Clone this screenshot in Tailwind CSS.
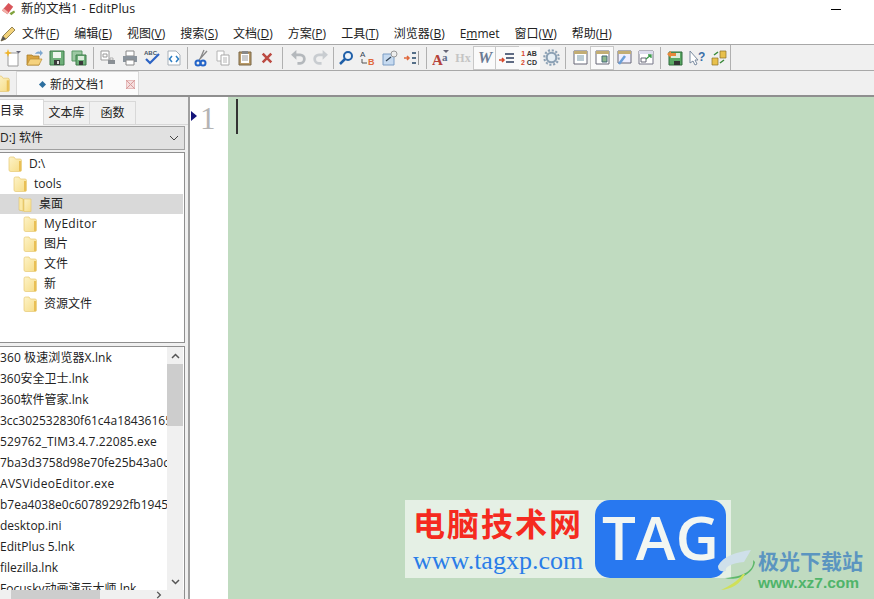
<!DOCTYPE html>
<html lang="zh"><head><meta charset="utf-8"><title>EditPlus</title>
<script src="https://cdn.jsdelivr.net/npm/@tailwindcss/browser@4"></script></head>
<body class="m-0 overflow-hidden bg-white">
<svg class="absolute h-0 w-0"><defs>
<linearGradient id="fg" x1="0" y1="0" x2="1" y2="1"><stop offset="0" stop-color="#fdf3c8"/><stop offset="1" stop-color="#f6dc86"/></linearGradient>
<symbol id="folder" viewBox="0 0 14 16"><path d="M1 2.500q0-1.500 1.500-1.500h3.500l1.500 2h4.500q1.500 0 1.500 1.500V14q0 1.500-1.500 1.500h-9Q1 15.500 1 14z" fill="url(#fg)" stroke="#e6c873" stroke-width=".7"/><path d="M11 5h2v10h-2z" fill="#e9bf55"/></symbol>
<symbol id="folderopen" viewBox="0 0 14 16"><path d="M1 1.500 6 3v12.500L1 14z" fill="#f0cf6a"/><path d="M6 3h7v12.500H6z" fill="url(#fg)" stroke="#e6c873" stroke-width=".7"/><path d="M1 1.500 5 3v12L1 14z" fill="#fbe9a6" stroke="#d9b95c" stroke-width=".5"/></symbol>
</defs></svg>
<div class="relative flex h-[599px] w-[874px] flex-col overflow-hidden bg-white text-[12px] leading-none text-[#222] [font-family:'Open_Sans','Noto_Sans_CJK_SC',sans-serif]">

<!-- title bar -->
<div class="flex h-[18px] shrink-0 items-center justify-between pl-[1px] pr-[33px]">
  <div class="flex items-center gap-[5px]">
    <svg class="h-[15px] w-[15px]" viewBox="0 0 16 16"><path d="M1 9 8 1l5 4-6 8z" fill="#d9555a"/><path d="M1 9l6 4 1-2-5-4z" fill="#f2b0a8"/><path d="M9 12l2 2 4-3-1-2z" fill="#7fa23c"/></svg>
    <span class="text-[12.500px]">新的文档1 - EditPlus</span>
  </div>
  <div class="h-[1px] w-[10px] bg-black"></div>
</div>

<!-- menu -->
<div class="mt-[4px] flex h-[22px] shrink-0 items-center pt-[2px]">
  <svg class="h-[16px] w-[16px]" viewBox="0 0 16 16"><path d="M1 15l2-5L12 1l3 3-9 9z" fill="#f2d27a" stroke="#7a6a3a" stroke-width=".8"/><path d="M1 15l2-5 3 3z" fill="#555"/></svg>
  <div class="ml-[6px] flex gap-[15px] whitespace-nowrap text-[12px]">
    <span>文件(<u>F</u>)</span><span>编辑(<u>E</u>)</span><span>视图(<u>V</u>)</span><span>搜索(<u>S</u>)</span><span>文档(<u>D</u>)</span><span>方案(<u>P</u>)</span><span>工具(<u>T</u>)</span><span>浏览器(<u>B</u>)</span><span>E<u>m</u>met</span><span>窗口(<u>W</u>)</span><span>帮助(<u>H</u>)</span>
  </div>
</div>

<!-- toolbar -->
<div class="flex h-[27px] shrink-0 items-center border-y border-[#a8a8a8] bg-[#f0f0f0] pl-[2px]">
  <span class="flex h-[22px] w-[22px] items-center justify-center"><svg class="h-[18px] w-[18px]" viewBox="0 0 18 18"><path d="M4 4h10v13H4z" fill="#fff" stroke="#9a9a9a"/><path d="M4 0l1 3 3 1-3 1-1 3-1-3-3-1 3-1z" fill="#f0b429"/><path d="M12 2h5l-2.500 2.500z" fill="#667"/></svg></span>
  <span class="flex h-[22px] w-[22px] items-center justify-center"><svg class="h-[18px] w-[18px]" viewBox="0 0 18 18"><path d="M1 6h5l1 1h6v9H1z" fill="#d9a441" stroke="#a67c28" stroke-width=".8"/><path d="M1 16l3-6h12l-3 6z" fill="#f5d27e" stroke="#b88c30" stroke-width=".7"/><path d="M9 5c1-2 3-3 5-2V1l3 3-3 3V5c-2-.5-3 0-5 0z" fill="#7fa8d0"/></svg></span>
  <span class="flex h-[22px] w-[22px] items-center justify-center"><svg class="h-[16px] w-[16px]" viewBox="0 0 16 16"><path d="M1 1h14v14H1z" fill="#6fb07a" stroke="#3d7a48"/><path d="M4 2h8v6H4z" fill="#eef6ee"/><path d="M5 10h6v5H5z" fill="#3a3a3a"/><path d="M8 11h2v3H8z" fill="#ddd"/></svg></span>
  <span class="flex h-[22px] w-[22px] items-center justify-center"><svg class="h-[16px] w-[16px]" viewBox="0 0 16 16"><path d="M1 1h10v10H1z" fill="#9cc8a2" stroke="#5b9a66"/><path d="M5 5h10v10H5z" fill="#6fb07a" stroke="#3d7a48"/><path d="M7 6h6v4H7z" fill="#dcecdc"/><path d="M8 11h4v4H8z" fill="#3a3a3a"/></svg></span>
  <span class="mx-[3px] h-[22px] w-[1px] bg-[#b0b0b0]"></span>
  <span class="flex h-[22px] w-[22px] items-center justify-center"><svg class="h-[16px] w-[16px]" viewBox="0 0 16 16"><path d="M1 1h8v9H1z" fill="#fff" stroke="#999"/><path d="M3 4h4v3H3z" fill="none" stroke="#999"/><path d="M8 10h7v4H8z" fill="#8a8f94"/><path d="M10 8h3v2h-3z" fill="#fff" stroke="#888" stroke-width=".6"/></svg></span>
  <span class="flex h-[22px] w-[22px] items-center justify-center"><svg class="h-[16px] w-[16px]" viewBox="0 0 16 16"><path d="M4 1h8v5H4z" fill="#fff" stroke="#888"/><path d="M1 6h14v6H1z" fill="#8a939c"/><path d="M4 10h8v5H4z" fill="#fff" stroke="#888"/></svg></span>
  <span class="flex h-[22px] w-[22px] items-center justify-center"><svg class="h-[18px] w-[18px]" viewBox="0 0 18 18"><text x="1" y="6" font-size="6" font-weight="700" fill="#456" font-family="Liberation Sans">ABC</text><path d="M3 10l4 4 9-9" fill="none" stroke="#2c63c4" stroke-width="2.200"/></svg></span>
  <span class="flex h-[22px] w-[22px] items-center justify-center"><svg class="h-[16px] w-[16px]" viewBox="0 0 16 16"><path d="M2 1h8l4 4v10H2z" fill="#fff" stroke="#a8b0b8"/><path d="M6 6 3.500 9 6 12M10 6l2.500 3L10 12" fill="none" stroke="#2d7fc4" stroke-width="1.500"/></svg></span>
  <span class="mx-[2px] h-[22px] w-[1px] bg-[#b0b0b0]"></span>
  <span class="flex h-[22px] w-[22px] items-center justify-center"><svg class="h-[18px] w-[16px]" viewBox="0 0 16 18"><path d="M11 1 7 10M14 2 6 11" stroke="#888" stroke-width="1.300"/><circle cx="5" cy="14" r="2.500" fill="none" stroke="#2364c8" stroke-width="2"/><circle cx="10" cy="14" r="2.500" fill="none" stroke="#2364c8" stroke-width="2"/></svg></span>
  <span class="flex h-[22px] w-[22px] items-center justify-center"><svg class="h-[16px] w-[16px]" viewBox="0 0 16 16"><path d="M2 1h7v10H2z" fill="#fff" stroke="#b4b4b4"/><path d="M6 5h8v10H6z" fill="#fff" stroke="#a8a8a8"/><path d="M8 8h4M8 10h4M8 12h4" stroke="#b4b4b4"/></svg></span>
  <span class="flex h-[22px] w-[22px] items-center justify-center"><svg class="h-[16px] w-[16px]" viewBox="0 0 16 16"><path d="M2 2h12v13H2z" fill="#b99a68" stroke="#7a6644"/><path d="M4 4h8v9H4z" fill="#fff"/><path d="M5 1h6v3H5z" fill="#888"/><path d="M5 6h6M5 8h6M5 10h6" stroke="#999"/></svg></span>
  <span class="flex h-[22px] w-[22px] items-center justify-center"><svg class="h-[12px] w-[12px]" viewBox="0 0 14 14"><path d="M2 2l10 10M12 2 2 12" stroke="#bc4a42" stroke-width="3"/></svg></span>
  <span class="mx-[4px] h-[22px] w-[1px] bg-[#b0b0b0]"></span>
  <span class="flex h-[22px] w-[22px] items-center justify-center"><svg class="h-[17px] w-[17px]" viewBox="0 0 16 16"><path d="M5 5.500h4.500a4 4 0 0 1 0 8H7" fill="none" stroke="#b4b8bc" stroke-width="2.600"/><path d="M6 1 1 5.500 6 10z" fill="#b4b8bc"/></svg></span>
  <span class="flex h-[22px] w-[22px] items-center justify-center"><svg class="h-[17px] w-[17px]" viewBox="0 0 16 16"><path d="M11 5.500H6.500a4 4 0 0 0 0 8H9" fill="none" stroke="#c8ccd0" stroke-width="2.600"/><path d="M10 1l5 4.500L10 10z" fill="#c8ccd0"/></svg></span>
  <span class="mx-[1.500px] h-[22px] w-[1px] bg-[#b0b0b0]"></span>
  <span class="flex h-[22px] w-[22px] items-center justify-center"><svg class="h-[16px] w-[16px]" viewBox="0 0 16 16"><circle cx="10" cy="6" r="4" fill="#eef4fa" stroke="#1f5fa8" stroke-width="2"/><path d="M7 9l-5 5" stroke="#1f5fa8" stroke-width="2.500"/></svg></span>
  <span class="flex h-[22px] w-[22px] items-center justify-center"><svg class="h-[18px] w-[18px]" viewBox="0 0 18 18"><text x="1" y="8" font-size="8" fill="#345" font-family="Liberation Sans">A</text><text x="9" y="16" font-size="9" font-weight="700" fill="#e0683c" font-family="Liberation Sans">B</text><path d="M3 10v4h5" fill="none" stroke="#555"/></svg></span>
  <span class="flex h-[22px] w-[22px] items-center justify-center"><svg class="h-[16px] w-[16px]" viewBox="0 0 16 16"><path d="M1 4h11v11H1z" fill="#c6daf0" stroke="#7a9cc4"/><circle cx="12" cy="4" r="3" fill="#eee" stroke="#999"/><path d="M4 11l5-4" stroke="#345" stroke-width="1.200"/></svg></span>
  <span class="flex h-[22px] w-[22px] items-center justify-center"><svg class="h-[16px] w-[16px]" viewBox="0 0 16 16"><path d="M0 8h4M3 6l2 2-2 2" fill="none" stroke="#e0683c" stroke-width="1.500"/><path d="M8 3h4M8 8h4M8 13h4" stroke="#246" stroke-width="1.500"/><path d="M14.500 1v14" stroke="#999"/></svg></span>
  <span class="mx-[3px] h-[22px] w-[1px] bg-[#b0b0b0]"></span>
  <span class="flex h-[22px] w-[22px] items-center justify-center"><svg class="h-[18px] w-[18px]" viewBox="0 0 18 18"><text x="0" y="16" font-size="15" font-weight="700" fill="#b5433a" font-family="Liberation Serif">A</text><text x="10" y="12" font-size="11" font-weight="700" fill="#5d6d8a" font-family="Liberation Serif">a</text><path d="M11 1h6l-3 3z" fill="#667"/></svg></span>
  <span class="flex h-[22px] w-[22px] items-center justify-center text-[12px] font-bold text-[#c4c4c4] [font-family:'Liberation_Serif',serif]">Hx</span>
  <span class="flex h-[22px] w-[22px] items-center justify-center bg-[#fafafa] text-[16px] font-bold italic text-[#6a7a94] outline outline-[#c8c8c8] [font-family:'Liberation_Serif',serif]">W</span>
  <span class="flex h-[22px] w-[22px] items-center justify-center bg-[#fafafa] outline outline-[#c8c8c8]"><svg class="h-[16px] w-[16px]" viewBox="0 0 16 16"><path d="M0 10h5M3 8l2 2-2 2" fill="none" stroke="#d8482c" stroke-width="1.500"/><path d="M6 4h9M7 8h8M7 12h8" stroke="#2c3c5c" stroke-width="1.300"/></svg></span>
  <span class="flex h-[22px] w-[22px] flex-col items-center justify-center bg-[#fafafa] text-[7px] font-bold text-[#333] [font-family:'Liberation_Sans',sans-serif]"><span><span class="text-[#d8482c]">1</span> AB</span><span class="mt-[2px]"><span class="text-[#d8482c]">2</span> CD</span></span>
  <span class="flex h-[22px] w-[22px] items-center justify-center"><svg class="h-[17px] w-[17px]" viewBox="0 0 16 16"><circle cx="8" cy="8" r="4.500" fill="#e6eef4" stroke="#8ba0b4" stroke-width="2"/><circle cx="8" cy="8" r="6.800" fill="none" stroke="#8ba0b4" stroke-width="2" stroke-dasharray="2 1.560"/></svg></span>
  <span class="mx-[3px] h-[22px] w-[1px] bg-[#b0b0b0]"></span>
  <span class="flex h-[22px] w-[22px] items-center justify-center"><svg class="h-[15px] w-[15px]" viewBox="0 0 15 15"><path d="M1 1h13v13H1z" fill="#fff" stroke="#667"/><path d="M1 1h13v3H1z" fill="#c2ad74"/><path d="M4 6h7M4 8h7M4 10h7" stroke="#79a"/></svg></span>
  <span class="flex h-[22px] w-[22px] items-center justify-center bg-[#fafafa] outline outline-[#c8c8c8]"><svg class="h-[15px] w-[15px]" viewBox="0 0 15 15"><path d="M1 1h13v13H1z" fill="#fff" stroke="#667"/><path d="M1 1h13v3H1z" fill="#c2ad74"/><path d="M7 6h5v6H7z" fill="#8cb88c" stroke="#467"/></svg></span>
  <span class="flex h-[22px] w-[22px] items-center justify-center"><svg class="h-[16px] w-[16px]" viewBox="0 0 16 16"><path d="M2 1h13v12H2z" fill="#eef" stroke="#667"/><path d="M2 1h13v3H2z" fill="#c2ad74"/><path d="M9 6 3 14" stroke="#6a9ed8" stroke-width="2.500"/></svg></span>
  <span class="flex h-[22px] w-[22px] items-center justify-center"><svg class="h-[15px] w-[16px]" viewBox="0 0 16 15"><path d="M1 1h14v13H1z" fill="#fff" stroke="#778"/><path d="M1 1h14v3H1z" fill="#dde"/><path d="M3 8h5v4H3z" fill="none" stroke="#667"/><path d="M8 9l5-4M10 5h3v3" fill="none" stroke="#3a9a4a" stroke-width="1.300"/></svg></span>
  <span class="mx-[3px] h-[22px] w-[1px] bg-[#b0b0b0]"></span>
  <span class="flex h-[22px] w-[22px] items-center justify-center"><svg class="h-[16px] w-[16px]" viewBox="0 0 16 16"><path d="M2 2h13v13H2z" fill="#5aa864" stroke="#2f6b3a"/><path d="M4 3h9v5H4z" fill="#dcecdc"/><path d="M7 11h6v4H7z" fill="#333"/><path d="M0 4l4-3v2h5v3H4v2z" fill="#e8883c"/></svg></span>
  <span class="flex h-[22px] w-[22px] items-center justify-center"><svg class="h-[16px] w-[16px]" viewBox="0 0 16 16"><path d="M1 1v12l3-2 2 4 2-1-2-4h3z" fill="#fff" stroke="#7a8ba0"/><text x="9" y="11" font-size="12" font-weight="700" fill="#3a6ea8" font-family="Liberation Sans">?</text></svg></span>
  <span class="flex h-[22px] w-[22px] items-center justify-center"><svg class="h-[16px] w-[16px]" viewBox="0 0 16 16"><path d="M9 1h6v7H9zM1 8h6v7H1z" fill="#e8c04c" stroke="#8a7028" stroke-width=".7"/><path d="M3 5l4-3M9 13l4-3" fill="none" stroke="#3a8a3a" stroke-width="1.500"/></svg></span>
  <span class="h-[25px] w-[1px] bg-[#b0b0b0]"></span>
</div>

<!-- tab row -->
<div class="flex h-[26px] shrink-0 items-end border-b-2 border-[#8f8f8f] bg-[#f0f0f0]">
  <svg class="-ml-[5px] mb-[3px] h-[17px] w-[15px]" viewBox="0 0 14 16"><use href="#folder"/></svg>
  <div class="ml-[6px] flex h-[24px] w-[123px] items-center border border-b-0 border-[#d8d8d8] bg-[#fbfbfb] pl-[23px] pt-[2px]">
    <span class="mr-[5px] h-[5px] w-[5px] rotate-45 bg-[#2d6f9f]"></span><span class="text-[12px]">新的文档1</span>
    <svg class="ml-[21px] h-[9px] w-[9px]" viewBox="0 0 9 9"><path d="M0 0l9 9M9 0 0 9M0 0h9v9H0z" fill="#f4dede" stroke="#d99a9a"/></svg>
  </div>
</div>

<!-- main -->
<div class="flex min-h-0 flex-1">
  <div class="flex w-[188px] shrink-0 flex-col bg-[#f0f0f0]">
    <div class="flex h-[28px] shrink-0 items-end border-b border-[#d8d8d8] pr-[2px]">
      <div class="flex h-[26px] w-[44px] items-start border-r border-t border-[#d8d8d8] bg-white -mb-[1px] pt-[5px]">目录</div>
      <div class="flex h-[23px] w-[46px] items-center justify-center border-r border-t border-[#d8d8d8]">文本库</div>
      <div class="flex h-[23px] w-[46px] items-center justify-center border-r border-t border-[#d8d8d8]">函数</div>
    </div>
    <div class="mr-[3px] mt-[1px] flex h-[24px] shrink-0 items-center justify-between border border-l-0 border-[#a0a0a0] bg-[#e1e1e1] pr-[5px]">
      <span>D:] 软件</span>
      <svg class="h-[8px] w-[10px]" viewBox="0 0 10 8"><path d="M1 2l4 4 4-4" fill="none" stroke="#444"/></svg>
    </div>
    <div class="mr-[3px] mt-[2px] flex h-[191px] shrink-0 flex-col border border-l-0 border-[#8f8f8f] bg-white pr-[1px] pt-[1px]">
      <div class="flex h-[20px] shrink-0 items-center pl-[8px]"><svg class="mr-[7px] h-[16px] w-[14px]" viewBox="0 0 14 16"><use href="#folder"/></svg>D:\</div>
      <div class="flex h-[20px] shrink-0 items-center pl-[13px]"><svg class="mr-[7px] h-[16px] w-[14px]" viewBox="0 0 14 16"><use href="#folder"/></svg>tools</div>
      <div class="flex h-[20px] shrink-0 items-center bg-[#d9d9d9] pl-[18px]"><svg class="mr-[7px] h-[16px] w-[14px]" viewBox="0 0 14 16"><use href="#folderopen"/></svg>桌面</div>
      <div class="flex h-[20px] shrink-0 items-center pl-[23px] tracking-[0.3px]"><svg class="mr-[7px] h-[16px] w-[14px]" viewBox="0 0 14 16"><use href="#folder"/></svg>MyEditor</div>
      <div class="flex h-[20px] shrink-0 items-center pl-[23px]"><svg class="mr-[7px] h-[16px] w-[14px]" viewBox="0 0 14 16"><use href="#folder"/></svg>图片</div>
      <div class="flex h-[20px] shrink-0 items-center pl-[23px]"><svg class="mr-[7px] h-[16px] w-[14px]" viewBox="0 0 14 16"><use href="#folder"/></svg>文件</div>
      <div class="flex h-[20px] shrink-0 items-center pl-[23px]"><svg class="mr-[7px] h-[16px] w-[14px]" viewBox="0 0 14 16"><use href="#folder"/></svg>新</div>
      <div class="flex h-[20px] shrink-0 items-center pl-[23px]"><svg class="mr-[7px] h-[16px] w-[14px]" viewBox="0 0 14 16"><use href="#folder"/></svg>资源文件</div>
    </div>
    <div class="mr-[3px] mt-[3px] flex min-h-0 flex-1 flex-col border-t border-r border-[#8f8f8f] bg-white">
      <div class="flex min-h-0 flex-1">
        <div class="flex min-w-0 flex-1 flex-col overflow-hidden whitespace-nowrap">
          <div class="flex h-[21px] shrink-0 items-center tracking-[0.1px]">360 极速浏览器X.lnk</div>
          <div class="flex h-[21px] shrink-0 items-center">360安全卫士.lnk</div>
          <div class="flex h-[21px] shrink-0 items-center">360软件管家.lnk</div>
          <div class="flex h-[21px] shrink-0 items-center">3cc302532830f61c4a18436165</div>
          <div class="flex h-[21px] shrink-0 items-center tracking-[0.1px]">529762_TIM3.4.7.22085.exe</div>
          <div class="flex h-[21px] shrink-0 items-center">7ba3d3758d98e70fe25b43a0c1</div>
          <div class="flex h-[21px] shrink-0 items-center tracking-[0.3px]">AVSVideoEditor.exe</div>
          <div class="flex h-[21px] shrink-0 items-center">b7ea4038e0c60789292fb19456</div>
          <div class="flex h-[21px] shrink-0 items-center">desktop.ini</div>
          <div class="flex h-[21px] shrink-0 items-center">EditPlus 5.lnk</div>
          <div class="flex h-[21px] shrink-0 items-center">filezilla.lnk</div>
          <div class="flex h-[21px] shrink-0 items-center">Focusky动画演示大师.lnk</div>
        </div>
        <div class="mr-[1px] flex w-[16px] shrink-0 flex-col items-center bg-[#f0f0f0]">
          <svg class="mt-[6px] h-[6px] w-[9px]" viewBox="0 0 9 6"><path d="M1 5l3.500-3.500L8 5" fill="none" stroke="#555" stroke-width="1.500"/></svg>
          <div class="mt-[5px] h-[62px] w-full bg-[#cdcdcd]"></div>
          <svg class="mb-[5px] mt-auto h-[6px] w-[9px]" viewBox="0 0 9 6"><path d="M1 1l3.500 3.500L8 1" fill="none" stroke="#555" stroke-width="1.500"/></svg>
        </div>
      </div>
      <div class="flex h-[9px] shrink-0 items-start justify-between bg-[#f0f0f0] pr-[22px]">
        <div class="ml-[11px] h-[9px] w-[89px] bg-[#cdcdcd]"></div>
        <svg class="mt-[1px] h-[8px] w-[6px]" viewBox="0 0 6 9"><path d="M1 1l3.500 3.500L1 8" fill="none" stroke="#555" stroke-width="1.500"/></svg>
      </div>
    </div>
  </div>
  <div class="flex min-w-0 flex-1 border-l-2 border-[#a0a0a0]">
    <div class="relative w-[38px] shrink-0 bg-white">
      <svg class="absolute left-[1px] top-[14px] h-[10px] w-[6px]" viewBox="0 0 6 10"><path d="M0 0l6 5-6 5z" fill="#14147a"/></svg>
      <span class="absolute left-[10px] top-[6px] text-[31px] leading-[32px] text-[#b4b4b4] [font-family:'Liberation_Serif',serif]">1</span>
    </div>
    <div class="flex-1 bg-[#c0dbc0] pl-[8px] pt-[2px]"><div class="h-[35px] w-[2px] bg-[#333]"></div></div>
  </div>
</div>

<!-- watermark overlays -->
<div class="absolute left-[405px] top-[500px] flex h-[78px] w-[326px] bg-[#e5f0e5]">
  <div class="flex w-[190px] flex-col pl-[8px] pt-[4px]">
    <span class="whitespace-nowrap text-[32px] font-bold leading-[36px] tracking-[2px] text-[#f52a20] [font-family:'Noto_Sans_CJK_SC',sans-serif]">电脑技术网</span>
    <span class="mt-[8px] whitespace-nowrap text-[26px] leading-[26px] text-[#2a7de8] [font-family:'Liberation_Serif',serif]">www.tagxp.com</span>
  </div>
  <div class="flex h-[78px] w-[131px] items-center justify-center rounded-[15px] bg-[#2878f0] pb-[5px] text-[60px] font-semibold leading-none text-[#f2f6f2] [font-family:'Open_Sans',sans-serif]">TAG</div>
</div>
<div class="absolute left-[715px] top-[548px] flex items-start">
  <svg class="h-[44px] w-[44px]" viewBox="0 0 44 44"><path d="M36 2C22 4 8 8 3 18c0 5 4 6 8 5-2-4 6-8 18-9" fill="#cfe0ea"/><path d="M38 12c2 10-10 17-28 18 10 3 28-2 30-16z" fill="#5eb86a"/><path d="M28 26C22 34 14 38 6 42c10-1 20-6 24-16z" fill="#cfe05a"/></svg>
  <div class="-ml-[1px] flex flex-col">
    <span class="whitespace-nowrap text-[21px] font-bold leading-[24px] text-[#5b95c0] [font-family:'Noto_Sans_CJK_SC',sans-serif]">极光下载站</span>
    <span class="mt-[3px] whitespace-nowrap text-[15.500px] font-semibold leading-[16px] text-[#4fb46a] [font-family:'Liberation_Sans',sans-serif]">www.xz7.com</span>
  </div>
</div>
</div>
</body></html>
